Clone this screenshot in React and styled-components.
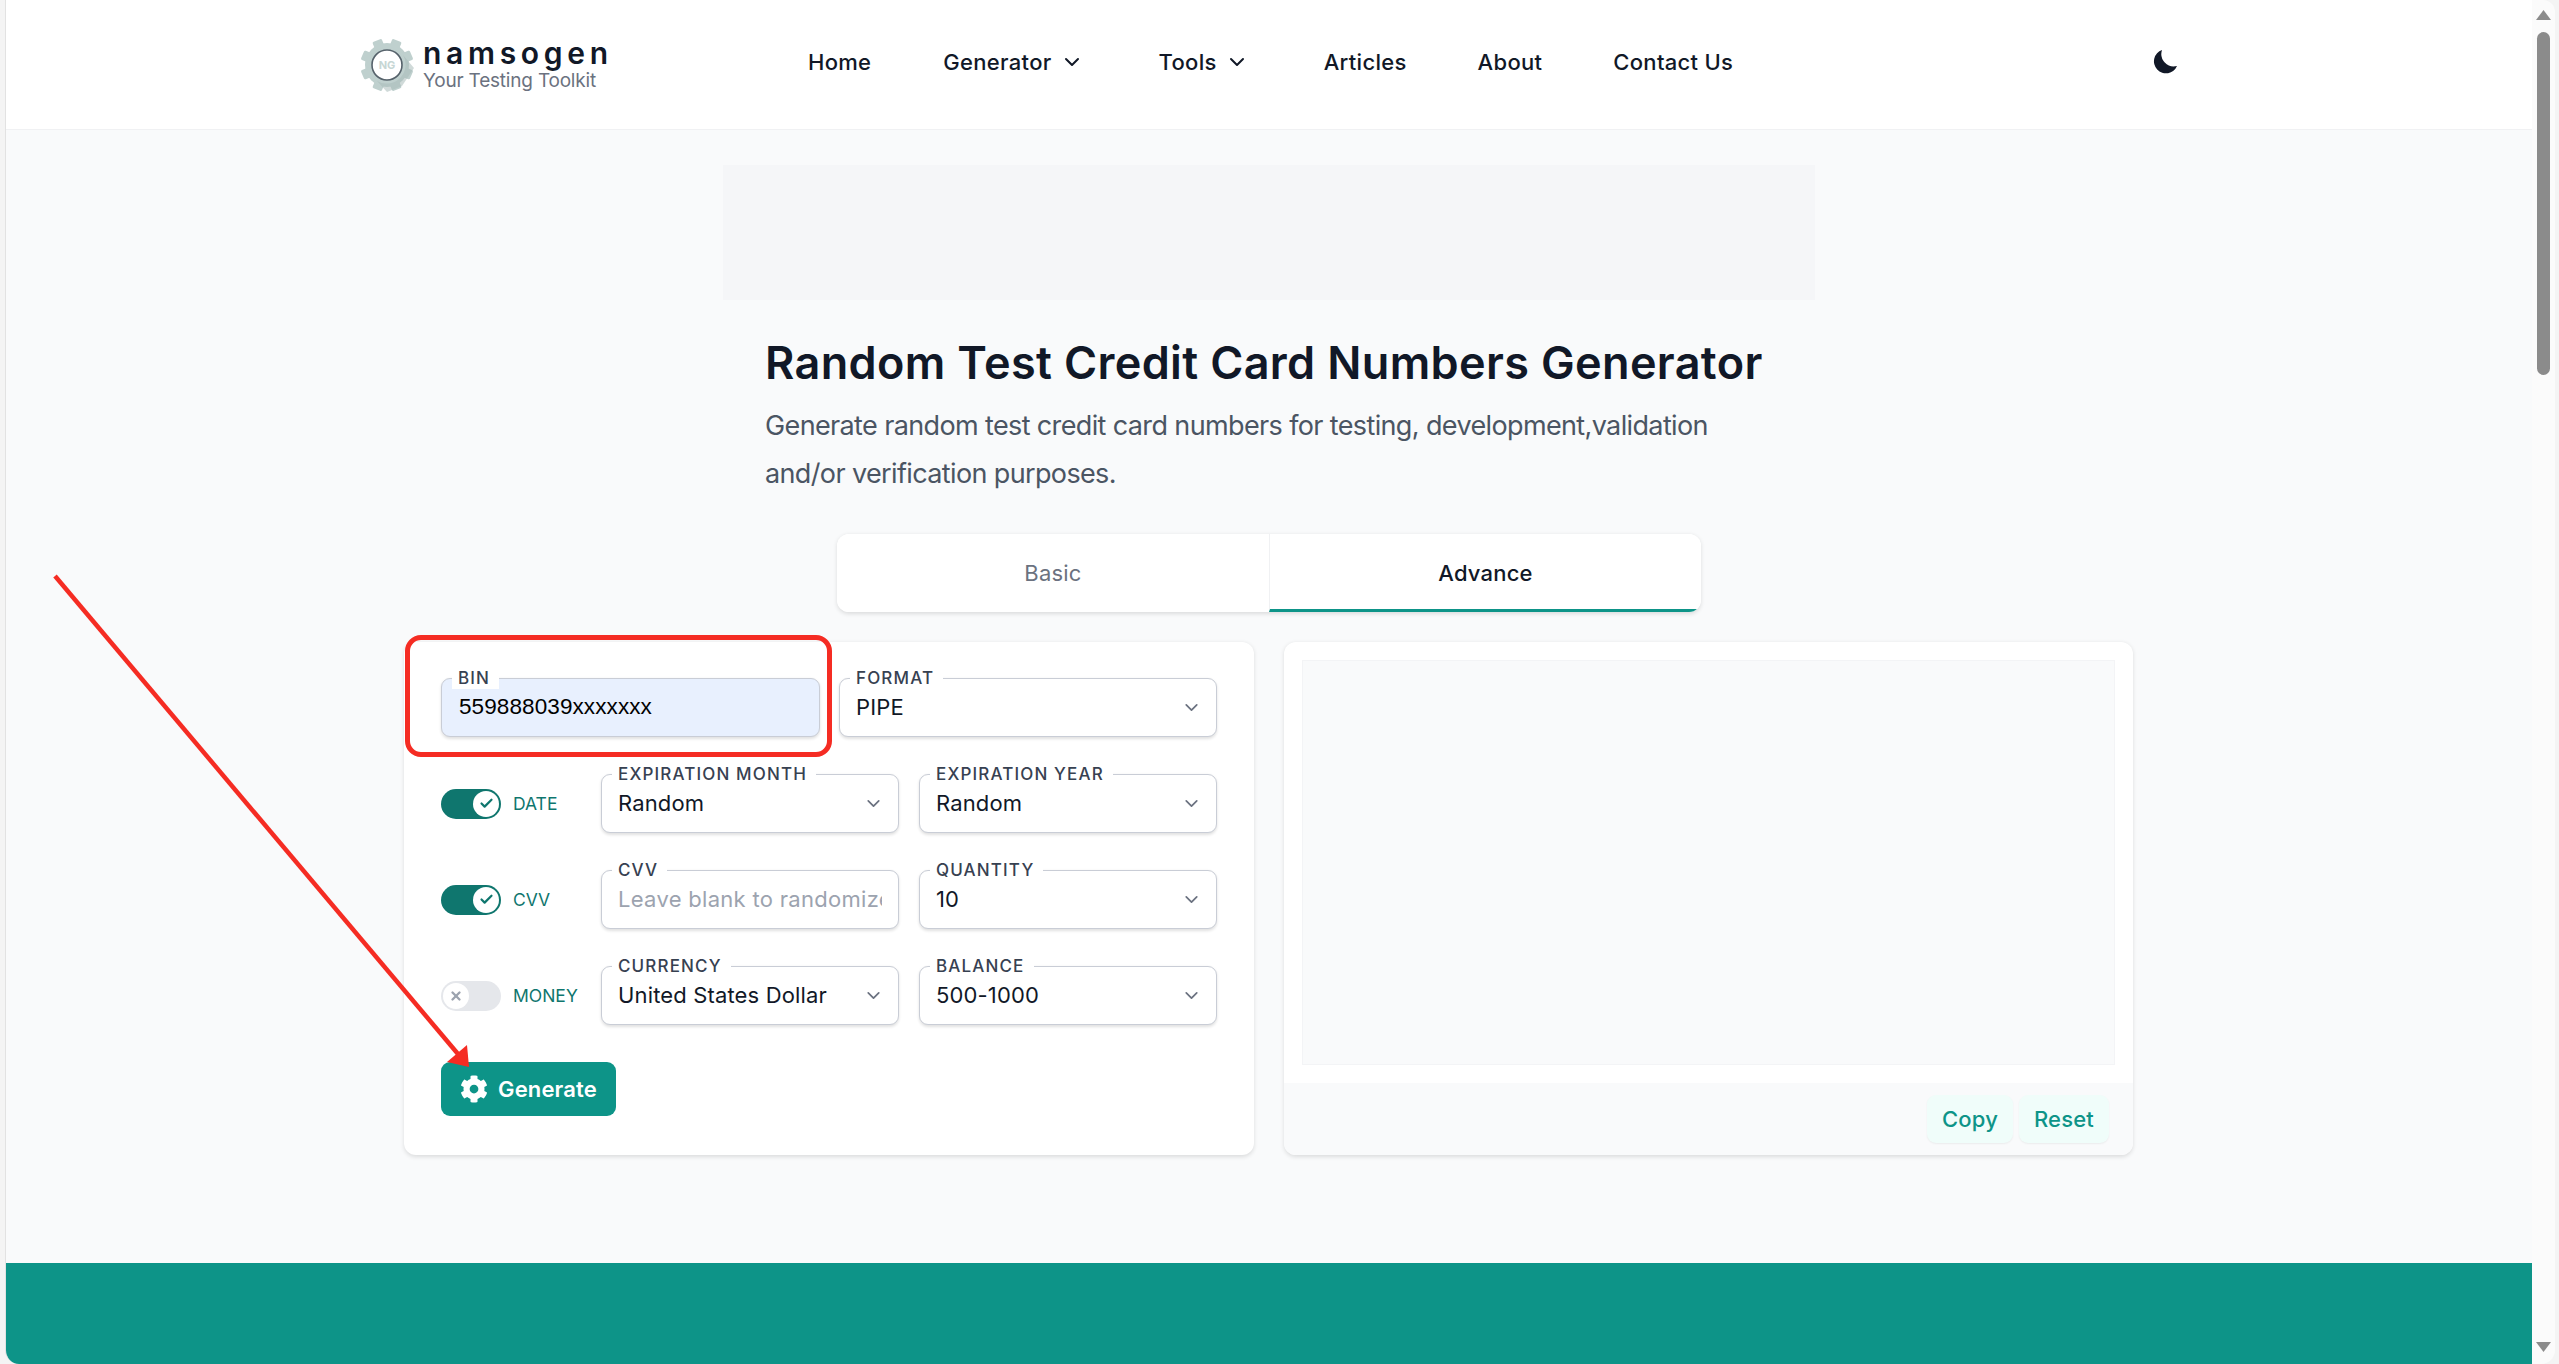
import React from "react";
import styled, { createGlobalStyle } from "styled-components";
import { ChevronDown, Check, X } from "lucide-react";
import { FaCog } from "react-icons/fa";

const Global = createGlobalStyle`
  html, body { margin: 0; padding: 0; background: #f4f4f4; overflow: hidden; }
  * { box-sizing: border-box; }
  body { font-family: Inter, "Open Sans", sans-serif; }
`;

const Screen = styled.div`
  position: relative;
  display: flex;
  width: 2559px;
  height: 1364px;
  padding: 0 4px 0 6px;
  overflow: hidden;
`;
const Viewport = styled.div`
  display: flex;
  flex: 1;
  min-width: 0;
  border-left: 1px solid #e2e2e2;
  margin-left: -1px;
  border-radius: 0 12px 14px 14px;
  overflow: hidden;
`;
const Page = styled.div`
  display: flex;
  flex-direction: column;
  flex: 1;
  min-width: 0;
  background: #f9fafb;
`;
const ScrollTrack = styled.div`
  display: flex;
  flex-direction: column;
  align-items: center;
  width: 23px;
  padding: 10px 0 12px;
  background: #fbfbfb;
`;
const ScrollArrow = styled.svg`
  display: block;
  width: 15px;
  height: 10px;
  fill: #8b8b8b;
`;
const ScrollThumb = styled.div`
  width: 13px;
  height: 343px;
  margin-top: 12px;
  margin-bottom: auto;
  border-radius: 7px;
  background: #8b8b8b;
`;

const Header = styled.header`
  display: flex;
  align-items: center;
  flex: none;
  height: 130px;
  padding-left: 354px;
  background: #fff;
  border-bottom: 1.5px solid #f0f1f3;
`;
const Logo = styled.div`
  display: flex;
  align-items: center;
  gap: 9px;
  width: 448px;
`;
const LogoMark = styled.svg`
  display: block;
  width: 54px;
  height: 54px;
  flex: none;
`;
const LogoText = styled.div`
  display: flex;
  flex-direction: column;
  margin-top: 0;
`;
const LogoName = styled.span`
  font-size: 30px;
  line-height: 30px;
  font-weight: 600;
  letter-spacing: 4.7px;
  color: #111827;
`;
const LogoTag = styled.span`
  margin-top: 1px;
  font-size: 19px;
  line-height: 23px;
  letter-spacing: -0.2px;
  color: #6b7280;
`;
const Nav = styled.nav`
  display: flex;
  align-items: center;
  width: 1369px;
  margin-top: -5px;
`;
const NavItem = styled.a`
  display: flex;
  align-items: center;
  gap: 8px;
  margin-right: ${(p) => p.$gap}px;
  font-size: 22px;
  font-weight: 550;
  letter-spacing: 0.3px;
  color: #111827;
  white-space: nowrap;
`;
const MoonIcon = styled.svg`
  display: block;
  width: 24px;
  height: 24px;
  margin-left: auto;
  fill: #111827;
`;

const Main = styled.main`
  display: flex;
  flex-direction: column;
  align-items: center;
  padding-top: 35px;
`;
const AdSlot = styled.div`
  width: 1092px;
  height: 135px;
  background: #f5f6f8;
`;
const Intro = styled.div`
  width: 1008px;
  margin-top: 29px;
`;
const Title = styled.h1`
  margin: 0;
  font-size: 45px;
  line-height: 67px;
  font-weight: 600;
  letter-spacing: 0.36px;
  color: #111827;
  white-space: nowrap;
`;
const Lead = styled.p`
  margin: 6px 0 0;
  font-size: 27px;
  line-height: 48px;
  letter-spacing: -0.63px;
  color: #4b5563;
`;
const Tabs = styled.div`
  display: grid;
  grid-template-columns: 1fr 1fr;
  width: 864px;
  height: 78px;
  margin-top: 36px;
  background: #fff;
  border-radius: 12px;
  box-shadow: 0 1.5px 4px rgba(0, 0, 0, 0.12);
  overflow: hidden;
`;
const Tab = styled.button`
  padding: 2px 0 0;
  border: 0;
  border-left: ${(p) => (p.$active ? "1.5px solid #f0f1f3" : "0")};
  border-bottom: 3px solid ${(p) => (p.$active ? "#0d9488" : "transparent")};
  background: #fff;
  font-family: inherit;
  font-size: 22px;
  font-weight: ${(p) => (p.$active ? 500 : 400)};
  letter-spacing: 0.2px;
  color: ${(p) => (p.$active ? "#111827" : "#6b7280")};
`;
const Cards = styled.div`
  display: grid;
  grid-template-columns: 850px 849px;
  gap: 30px;
  margin: 30px 0 0 -1px;
`;
const Card = styled.section`
  position: relative;
  display: flex;
  flex-direction: column;
  height: 513px;
  background: #fff;
  border-radius: 12px;
  box-shadow: 0 1.5px 4px rgba(0, 0, 0, 0.12);
  overflow: ${(p) => (p.$clip ? "hidden" : "visible")};
`;
const FormBody = styled.div`
  display: flex;
  flex-direction: column;
  gap: 37px;
  padding: 36px 37px 0;
`;
const TopRow = styled.div`
  display: grid;
  grid-template-columns: 379px 378px;
  column-gap: 19px;
`;
const OptionRow = styled.div`
  display: flex;
  align-items: center;
`;
const ToggleCell = styled.div`
  display: flex;
  align-items: center;
  gap: 12px;
  width: 160px;
  flex: none;
`;
const Toggle = styled.span`
  display: flex;
  align-items: center;
  justify-content: ${(p) => (p.$on ? "flex-end" : "flex-start")};
  width: 60px;
  height: 30px;
  padding: 2px;
  border-radius: 15px;
  background: ${(p) => (p.$on ? "#0f766e" : "#e5e7eb")};
`;
const Knob = styled.span`
  display: flex;
  align-items: center;
  justify-content: center;
  width: 26px;
  height: 26px;
  border-radius: 50%;
  background: #fff;
  color: ${(p) => (p.$on ? "#0f766e" : "#9ca3af")};
`;
const ToggleLabel = styled.span`
  font-size: 17.5px;
  color: #0f766e;
`;
const Pair = styled.div`
  display: grid;
  grid-template-columns: 298px 298px;
  column-gap: 20px;
`;
const Field = styled.div`
  position: relative;
  height: 59px;
  background: ${(p) => (p.$filled ? "#e8f0fe" : "#fff")};
  border: 1.5px solid #c9cdd6;
  border-radius: 9px;
  box-shadow: 0 1.5px 3px rgba(0, 0, 0, 0.12);
`;
const FieldLabel = styled.label`
  position: absolute;
  left: 10px;
  top: -12px;
  height: 22px;
  padding: 0 9px 0 6px;
  background: #fff;
  font-size: 17px;
  line-height: 22px;
  font-weight: 500;
  letter-spacing: 1.15px;
  color: #374151;
  white-space: nowrap;
`;
const TextInput = styled.input`
  display: block;
  width: 100%;
  height: 100%;
  padding: 0 16px 2px ${(p) => (p.$filled ? "17px" : "16px")};
  border: 0;
  outline: 0;
  background: transparent;
  font-family: ${(p) => (p.$filled ? '"Liberation Sans", Arial, sans-serif' : "inherit")};
  font-size: ${(p) => (p.$filled ? "22.5px" : "22px")};
  letter-spacing: ${(p) => (p.$filled ? "0.1px" : "0.3px")};
  color: #000;
  &::placeholder { color: #9ca3af; opacity: 1; }
`;
const Select = styled.select`
  display: block;
  width: 100%;
  height: 100%;
  padding: 0 40px 2px 16px;
  border: 0;
  outline: 0;
  background: transparent;
  appearance: none;
  font-family: inherit;
  font-size: 22px;
  letter-spacing: 0.15px;
  color: #111827;
`;
const Chevron = styled(ChevronDown)`
  position: absolute;
  right: 14px;
  top: 50%;
  width: 21px;
  height: 21px;
  margin-top: -10.5px;
  color: #6b7280;
  pointer-events: none;
`;
const GenerateButton = styled.button`
  display: inline-flex;
  align-items: center;
  gap: 10px;
  width: 175px;
  height: 54px;
  padding: 0 0 0 19px;
  border: 0;
  border-radius: 9px;
  background: #0d9488;
  font-family: inherit;
  font-size: 22px;
  font-weight: 600;
  letter-spacing: 0.15px;
  color: #fff;
`;
const ResultBox = styled.div`
  height: 405px;
  margin: 18px 18px 0;
  background: #f9fafb;
  border: 1.5px solid #f3f4f6;
`;
const ResultFooter = styled.div`
  display: flex;
  justify-content: flex-end;
  gap: 6px;
  height: 72px;
  margin-top: 18px;
  padding: 12px 24px 0;
  background: #f9fafb;
`;
const GhostButton = styled.button`
  width: ${(p) => p.$w}px;
  height: 48px;
  padding: 0;
  border: 0;
  border-radius: 9px;
  background: #f0fdfa;
  box-shadow: 0 1px 2px rgba(0, 0, 0, 0.06);
  font-family: inherit;
  font-size: 22px;
  font-weight: 550;
  letter-spacing: 0.2px;
  color: #0d9488;
`;
const Footer = styled.footer`
  flex: 1;
  margin-top: 108px;
  background: #0d9488;
`;
const RedFrame = styled.div`
  position: absolute;
  left: 1px;
  top: -7px;
  width: 427px;
  height: 122px;
  border: 5px solid #f52c23;
  border-radius: 16px;
  pointer-events: none;
`;
const ArrowLayer = styled.svg`
  position: absolute;
  left: 0;
  top: 0;
  width: 2559px;
  height: 1364px;
  pointer-events: none;
`;

const Dropdown = ({ label, value }) => (
  <Field>
    <FieldLabel>{label}</FieldLabel>
    <Select defaultValue={value}>
      <option>{value}</option>
    </Select>
    <Chevron strokeWidth={2} />
  </Field>
);

const Switch = ({ on, label }) => (
  <ToggleCell>
    <Toggle $on={on}>
      <Knob $on={on}>
        {on ? <Check size={15} strokeWidth={3.5} /> : <X size={14} strokeWidth={4} />}
      </Knob>
    </Toggle>
    <ToggleLabel>{label}</ToggleLabel>
  </ToggleCell>
);

const teeth = [0, 45, 90, 135, 180, 225, 270, 315];

const GearLogo = () => (
  <LogoMark viewBox="0 0 54 54">
    <circle cx="27" cy="27" r="22" fill="#bfd0ce" />
    {teeth.map((a) => (
      <rect key={a} x="22" y="0.5" width="10" height="9" rx="1.5" fill="#bfd0ce" transform={`rotate(${a + 22.5} 27 27)`} />
    ))}
    <path d="M43 17 A 19 19 0 0 1 17 43 L 27 54 L 42 48 L 54 30 Z" fill="#a9bcba" opacity="0.55" />
    <circle cx="27" cy="27" r="15" fill="#fff" stroke="#56626b" strokeWidth="1.6" />
    <text x="27" y="31" textAnchor="middle" fontSize="11" fontWeight="700" fill="#c6d6d4" fontFamily="Inter, sans-serif">NG</text>
  </LogoMark>
);

export default function App() {
  return (
    <>
      <Global />
      <Screen>
        <Viewport>
          <Page>
            <Header>
              <Logo>
                <GearLogo />
                <LogoText>
                  <LogoName>namsogen</LogoName>
                  <LogoTag>Your Testing Toolkit</LogoTag>
                </LogoText>
              </Logo>
              <Nav>
                <NavItem $gap={72}>Home</NavItem>
                <NavItem $gap={75}>Generator <ChevronDown size={24} /></NavItem>
                <NavItem $gap={75}>Tools <ChevronDown size={24} /></NavItem>
                <NavItem $gap={71}>Articles</NavItem>
                <NavItem $gap={71}>About</NavItem>
                <NavItem $gap={0}>Contact Us</NavItem>
                <MoonIcon viewBox="0 0 24 24">
                  <path d="M9 0 A 12 12 0 1 0 24 16 A 12.5 12.5 0 0 1 9 0 Z" />
                </MoonIcon>
              </Nav>
            </Header>
            <Main>
              <AdSlot />
              <Intro>
                <Title>Random Test Credit Card Numbers Generator</Title>
                <Lead>Generate random test credit card numbers for testing, development,validation and/or verification purposes.</Lead>
              </Intro>
              <Tabs>
                <Tab>Basic</Tab>
                <Tab $active>Advance</Tab>
              </Tabs>
              <Cards>
                <Card>
                  <FormBody>
                    <TopRow>
                      <Field $filled>
                        <FieldLabel>BIN</FieldLabel>
                        <TextInput $filled readOnly value="559888039xxxxxxx" />
                      </Field>
                      <Dropdown label="FORMAT" value="PIPE" />
                    </TopRow>
                    <OptionRow>
                      <Switch on label="DATE" />
                      <Pair>
                        <Dropdown label="EXPIRATION MONTH" value="Random" />
                        <Dropdown label="EXPIRATION YEAR" value="Random" />
                      </Pair>
                    </OptionRow>
                    <OptionRow>
                      <Switch on label="CVV" />
                      <Pair>
                        <Field>
                          <FieldLabel>CVV</FieldLabel>
                          <TextInput placeholder="Leave blank to randomize" />
                        </Field>
                        <Dropdown label="QUANTITY" value="10" />
                      </Pair>
                    </OptionRow>
                    <OptionRow>
                      <Switch label="MONEY" />
                      <Pair>
                        <Dropdown label="CURRENCY" value="United States Dollar" />
                        <Dropdown label="BALANCE" value="500-1000" />
                      </Pair>
                    </OptionRow>
                    <div>
                      <GenerateButton><FaCog size={28} /> Generate</GenerateButton>
                    </div>
                  </FormBody>
                  <RedFrame />
                </Card>
                <Card $clip>
                  <ResultBox />
                  <ResultFooter>
                    <GhostButton $w={86}>Copy</GhostButton>
                    <GhostButton $w={90}>Reset</GhostButton>
                  </ResultFooter>
                </Card>
              </Cards>
            </Main>
            <Footer />
          </Page>
          <ScrollTrack>
            <ScrollArrow viewBox="0 0 15 10"><path d="M7.5 0 L15 10 H0 Z" /></ScrollArrow>
            <ScrollThumb />
            <ScrollArrow viewBox="0 0 15 10"><path d="M0 0 H15 L7.5 10 Z" /></ScrollArrow>
          </ScrollTrack>
        </Viewport>
        <ArrowLayer viewBox="0 0 2559 1364">
          <line x1="55" y1="576" x2="458" y2="1054" stroke="#f52c23" strokeWidth="4.5" />
          <path d="M447 1062 L467 1045 L469 1067 Z" fill="#f52c23" />
        </ArrowLayer>
      </Screen>
    </>
  );
}
